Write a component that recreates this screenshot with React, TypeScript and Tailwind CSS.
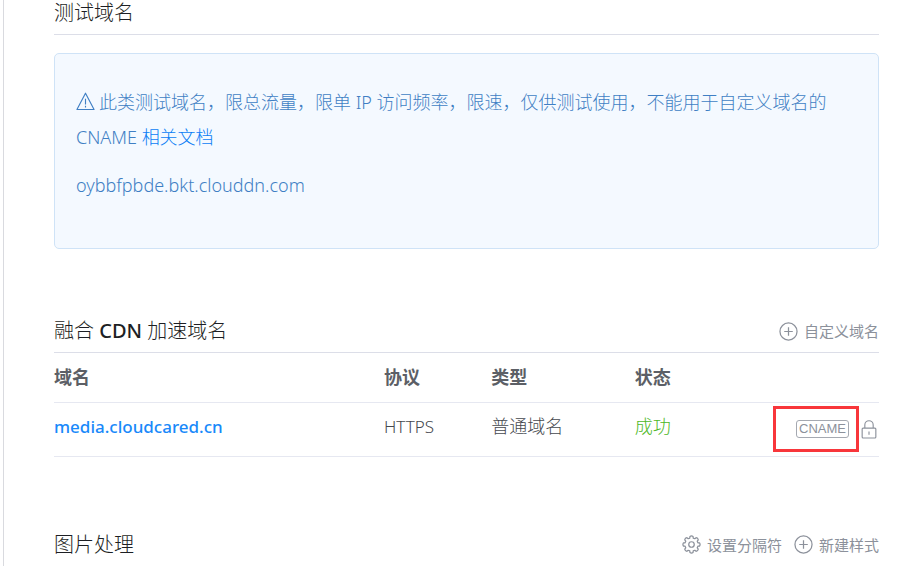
import type { ReactNode } from "react";

type IconProps = { className?: string };

function PlusCircleIcon({ className }: IconProps) {
  return (
    <svg className={className} viewBox="0 0 20 20" fill="none" stroke="currentColor" strokeWidth="1.3" aria-hidden="true">
      <circle cx="10" cy="10" r="9" />
      <path d="M10 5.5v9M5.5 10h9" />
    </svg>
  );
}

const toothPoint = (radius: number, degrees: number) => {
  const a = (degrees * Math.PI) / 180;
  return `${(10 + radius * Math.cos(a)).toFixed(2)} ${(10 + radius * Math.sin(a)).toFixed(2)}`;
};

const gearOutline =
  Array.from({ length: 8 }, (_, i) => {
    const c = i * 45;
    return `${i === 0 ? "M" : "L"}${toothPoint(7, c - 15)}L${toothPoint(8.6, c - 11)}Q${toothPoint(9.6, c)} ${toothPoint(8.6, c + 11)}L${toothPoint(7, c + 15)}`;
  }).join("") + "Z";

function GearIcon({ className }: IconProps) {
  return (
    <svg className={className} viewBox="0 0 20 20" fill="none" stroke="currentColor" strokeWidth="1.3" strokeLinejoin="round" aria-hidden="true">
      <path d={gearOutline} />
      <circle cx="10" cy="10" r="2.9" />
    </svg>
  );
}

function WarningIcon({ className }: IconProps) {
  return (
    <svg className={className} viewBox="0 0 20 20" fill="none" stroke="currentColor" strokeWidth="1.2" strokeLinejoin="round" aria-hidden="true">
      <path d="M10 1.2 19 18.4H1Z" />
      <path d="M10 7v6.2M10 14.6v1.6" />
    </svg>
  );
}

function LockIcon({ className }: IconProps) {
  return (
    <svg className={className} viewBox="0 0 16 20" fill="none" stroke="currentColor" strokeWidth="1.2" aria-hidden="true">
      <rect x="0.8" y="8.5" width="14.4" height="10.5" rx="1" />
      <path d="M3.6 8.5V5.2a4.4 4.4 0 0 1 8.8 0v3.3M8 12v3.5" />
    </svg>
  );
}

function ActionButton({ icon, children }: { icon: ReactNode; children: ReactNode }) {
  return (
    <button type="button" className="flex items-center gap-[6px] text-[15px] leading-[26px] text-[#8c919b]">
      {icon}
      {children}
    </button>
  );
}

function SectionHeader({ title, actions }: { title: ReactNode; actions?: ReactNode }) {
  return (
    <header className="flex items-center justify-between pb-2">
      <h2 className="text-[20px] leading-[26px] font-light text-[#1d1f24]">{title}</h2>
      {actions && <div className="flex gap-3">{actions}</div>}
    </header>
  );
}

export default function App() {
  return (
    <main className="ml-[3px] min-h-screen border-l border-[#d9dadf] bg-white pr-[41px] pl-[50px] font-['Noto_Sans','Noto_Sans_CJK_SC',sans-serif] text-[18px]">
      <section>
        <div className="border-b border-[#dcdee8]">
          <SectionHeader title="测试域名" />
        </div>
        <div className="mt-[18px] rounded-[5px] border border-[#cfe3f7] bg-[#f4f9ff] px-[21px] pt-[31px] pb-[45px] font-light text-[#3f7fc4]">
          <p className="leading-[35px]">
            <WarningIcon className="mr-1 inline size-[19px] align-[-2px]" />
            此类测试域名，限总流量，限单 IP 访问频率，限速，仅供测试使用，不能用于自定义域名的 CNAME{" "}
            <a href="#docs" className="text-[#0a7df5]">相关文档</a>
          </p>
          <p className="mt-[13px] leading-[35px]">oybbfpbde.bkt.clouddn.com</p>
        </div>
      </section>

      <section className="mt-[69px]">
        <div className="border-b border-[#dcdee8]">
          <SectionHeader
            title={<>融合 <span className="font-medium">CDN</span> 加速域名</>}
            actions={<ActionButton icon={<PlusCircleIcon className="size-[19px]" />}>自定义域名</ActionButton>}
          />
        </div>
        <table className="w-full table-fixed text-left text-[#5c5f66]">
          <thead>
            <tr className="h-[49px] border-b border-[#e6e8f1]">
              <th scope="col" className="w-[40%] font-bold">域名</th>
              <th scope="col" className="w-[13%] font-bold">协议</th>
              <th scope="col" className="w-[17.4%] font-bold">类型</th>
              <th scope="col" className="w-[14%] font-bold">状态</th>
              <td />
            </tr>
          </thead>
          <tbody>
            <tr className="h-[54px] border-b border-[#e6e8f1]">
              <td className="pb-[5px] text-[17px]"><a href="#media" className="font-medium text-[#1989fa]">media.cloudcared.cn</a></td>
              <td className="pb-[5px] text-[17px] font-light text-[#45484e]">HTTPS</td>
              <td className="pb-[5px] font-light text-[#45484e]">普通域名</td>
              <td className="pb-[5px] font-light text-[#4db81f]">成功</td>
              <td>
                <div className="relative flex items-center justify-end gap-3 pr-[2px] text-[#8c919b]">
                  <button type="button" className="rounded-[3px] border border-[#a5a9b1] px-[2px] font-['Liberation_Sans',sans-serif] text-[13px] leading-[16px]">
                    CNAME
                  </button>
                  <button type="button" aria-label="HTTPS">
                    <LockIcon className="h-[19px] w-[16px]" />
                  </button>
                  <span className="pointer-events-none absolute top-1/2 right-5 h-[46px] w-[86px] -translate-y-1/2 border-3 border-[#f8363b]" />
                </div>
              </td>
            </tr>
          </tbody>
        </table>
      </section>

      <section className="mt-[75px]">
        <SectionHeader
          title="图片处理"
          actions={
            <>
              <ActionButton icon={<GearIcon className="size-[19px]" />}>设置分隔符</ActionButton>
              <ActionButton icon={<PlusCircleIcon className="size-[19px]" />}>新建样式</ActionButton>
            </>
          }
        />
      </section>
    </main>
  );
}
